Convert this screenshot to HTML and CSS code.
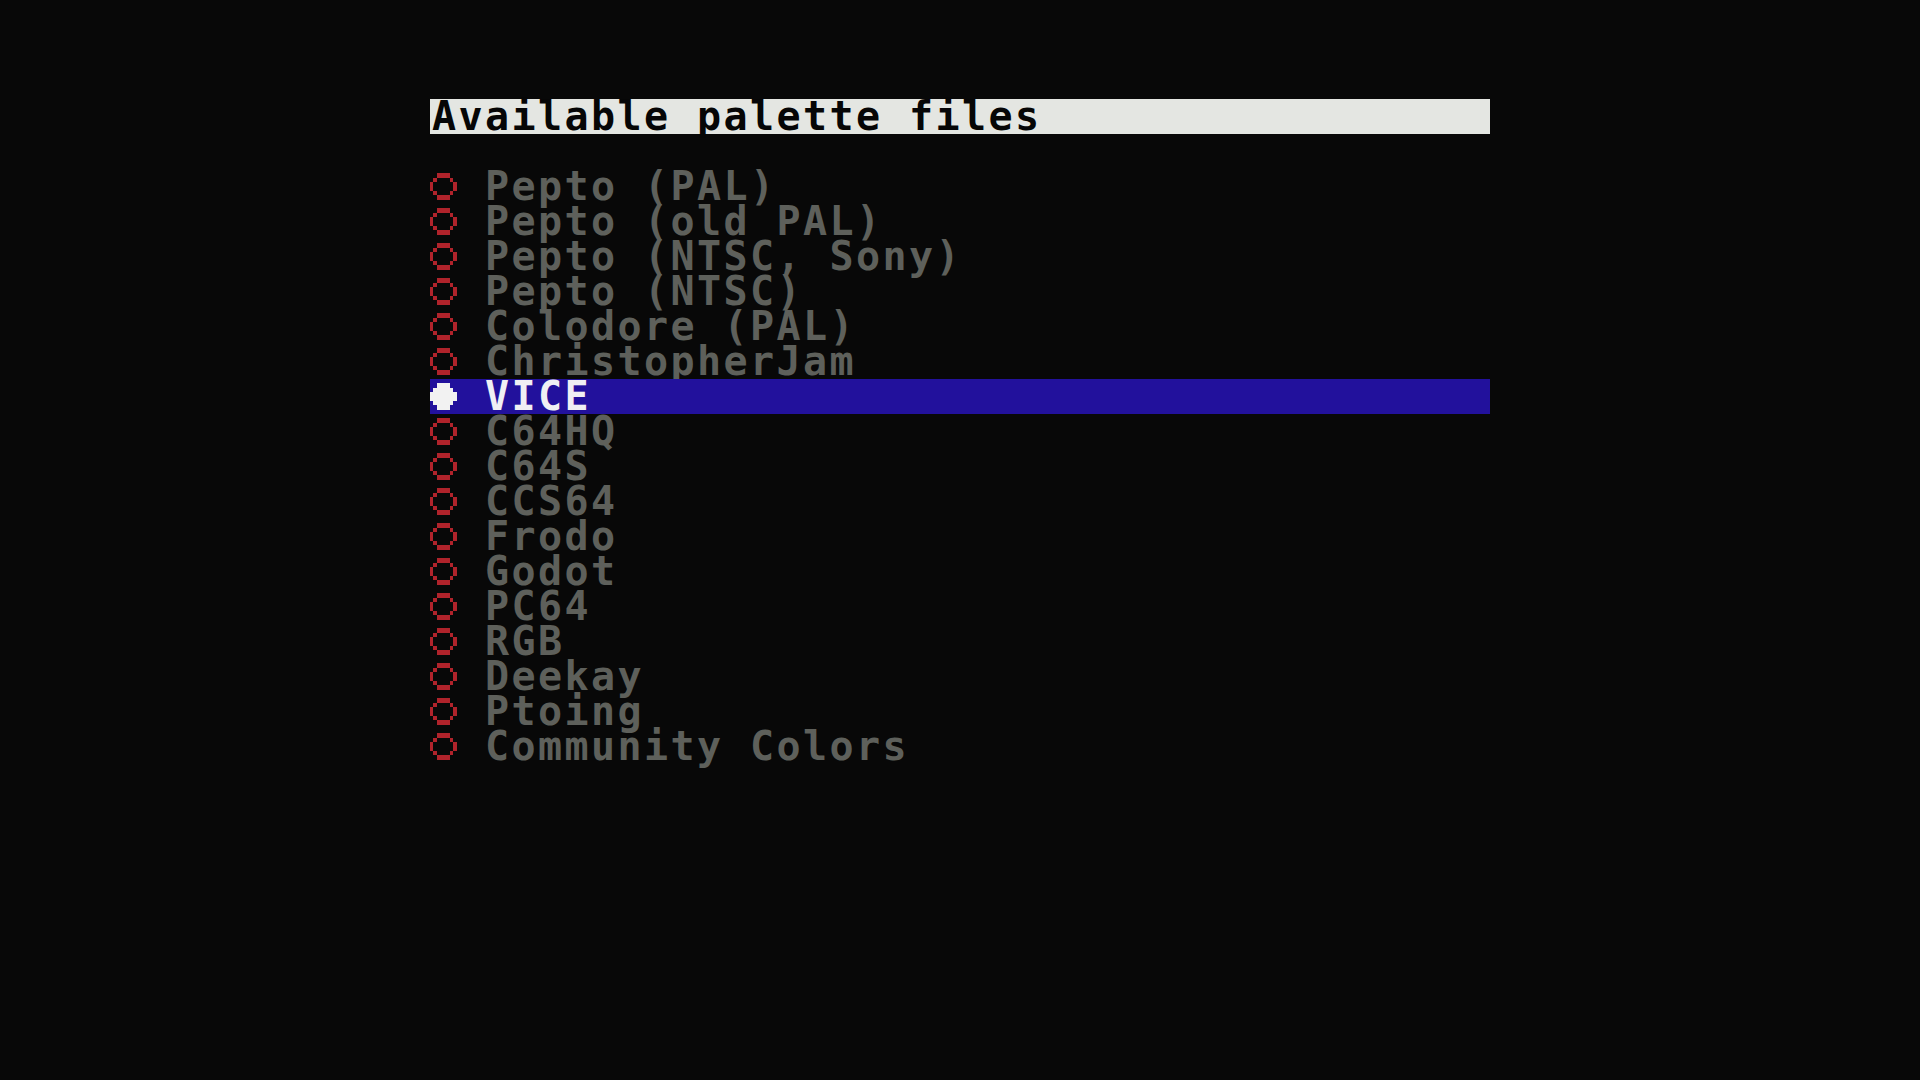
FILE: index.html
```html
<!DOCTYPE html>
<html lang="en">
<head>
<meta charset="utf-8">
<title>Available palette files</title>
<link rel="stylesheet" href="styles.css">
</head>
<body>
<svg width="0" height="0" class="defs" aria-hidden="true">
  <defs>
    <g id="ring">
      <rect x="2" y="1" width="4" height="1"/>
      <rect x="1" y="2" width="1" height="1"/>
      <rect x="6" y="2" width="1" height="1"/>
      <rect x="0" y="3" width="1" height="2"/>
      <rect x="7" y="3" width="1" height="2"/>
      <rect x="1" y="5" width="1" height="1"/>
      <rect x="6" y="5" width="1" height="1"/>
      <rect x="2" y="6" width="4" height="1"/>
    </g>
    <g id="dot">
      <rect x="2" y="1" width="4" height="1"/>
      <rect x="1" y="2" width="6" height="1"/>
      <rect x="0" y="3" width="8" height="2"/>
      <rect x="1" y="5" width="6" height="1"/>
      <rect x="2" y="6" width="4" height="1"/>
    </g>
  </defs>
</svg>
<main class="screen">
  <div class="title">Available palette files</div>
  <ul class="list">
    <li class="item"><svg class="bullet" viewBox="0 0 8 8" preserveAspectRatio="none"><use href="#ring"/></svg><span class="label">Pepto (PAL)</span></li>
    <li class="item"><svg class="bullet" viewBox="0 0 8 8" preserveAspectRatio="none"><use href="#ring"/></svg><span class="label">Pepto (old PAL)</span></li>
    <li class="item"><svg class="bullet" viewBox="0 0 8 8" preserveAspectRatio="none"><use href="#ring"/></svg><span class="label">Pepto (NTSC, Sony)</span></li>
    <li class="item"><svg class="bullet" viewBox="0 0 8 8" preserveAspectRatio="none"><use href="#ring"/></svg><span class="label">Pepto (NTSC)</span></li>
    <li class="item"><svg class="bullet" viewBox="0 0 8 8" preserveAspectRatio="none"><use href="#ring"/></svg><span class="label">Colodore (PAL)</span></li>
    <li class="item"><svg class="bullet" viewBox="0 0 8 8" preserveAspectRatio="none"><use href="#ring"/></svg><span class="label">ChristopherJam</span></li>
    <li class="item selected"><svg class="bullet" viewBox="0 0 8 8" preserveAspectRatio="none"><use href="#dot"/></svg><span class="label">VICE</span></li>
    <li class="item"><svg class="bullet" viewBox="0 0 8 8" preserveAspectRatio="none"><use href="#ring"/></svg><span class="label">C64HQ</span></li>
    <li class="item"><svg class="bullet" viewBox="0 0 8 8" preserveAspectRatio="none"><use href="#ring"/></svg><span class="label">C64S</span></li>
    <li class="item"><svg class="bullet" viewBox="0 0 8 8" preserveAspectRatio="none"><use href="#ring"/></svg><span class="label">CCS64</span></li>
    <li class="item"><svg class="bullet" viewBox="0 0 8 8" preserveAspectRatio="none"><use href="#ring"/></svg><span class="label">Frodo</span></li>
    <li class="item"><svg class="bullet" viewBox="0 0 8 8" preserveAspectRatio="none"><use href="#ring"/></svg><span class="label">Godot</span></li>
    <li class="item"><svg class="bullet" viewBox="0 0 8 8" preserveAspectRatio="none"><use href="#ring"/></svg><span class="label">PC64</span></li>
    <li class="item"><svg class="bullet" viewBox="0 0 8 8" preserveAspectRatio="none"><use href="#ring"/></svg><span class="label">RGB</span></li>
    <li class="item"><svg class="bullet" viewBox="0 0 8 8" preserveAspectRatio="none"><use href="#ring"/></svg><span class="label">Deekay</span></li>
    <li class="item"><svg class="bullet" viewBox="0 0 8 8" preserveAspectRatio="none"><use href="#ring"/></svg><span class="label">Ptoing</span></li>
    <li class="item"><svg class="bullet" viewBox="0 0 8 8" preserveAspectRatio="none"><use href="#ring"/></svg><span class="label">Community Colors</span></li>
  </ul>
</main>
</body>
</html>
```
FILE: styles.css
```css
html, body {
  margin: 0;
  padding: 0;
  background: #080808;
  height: 100%;
}
body {
  width: 1920px;
  height: 1080px;
  overflow: hidden;
}
.defs {
  position: absolute;
  width: 0;
  height: 0;
}
.screen {
  display: flex;
  flex-direction: column;
  width: 1060px;
  padding: 99px 0 0 430px;
  font-family: "DejaVu Sans Mono", "Liberation Mono", monospace;
  font-weight: bold;
  font-size: 40px;
  line-height: 35px;
  letter-spacing: 2.42px;
}
.title {
  height: 35px;
  padding-left: 2px;
  background: #e4e6e2;
  color: #060606;
  white-space: pre;
}
.list {
  list-style: none;
  margin: 35px 0 0 0;
  padding: 0;
  display: flex;
  flex-direction: column;
}
.item {
  display: flex;
  align-items: flex-start;
  height: 35px;
  color: #5e605b;
  white-space: pre;
}
.label {
  padding-left: 2px;
}
.bullet {
  width: 26.5px;
  height: 35px;
  margin-right: 26.5px;
  fill: #b0232b;
  shape-rendering: crispEdges;
  flex: none;
}
.selected {
  background: #22119c;
  color: #f0f0f4;
}
.selected .bullet {
  fill: #f2f2f2;
}
```
